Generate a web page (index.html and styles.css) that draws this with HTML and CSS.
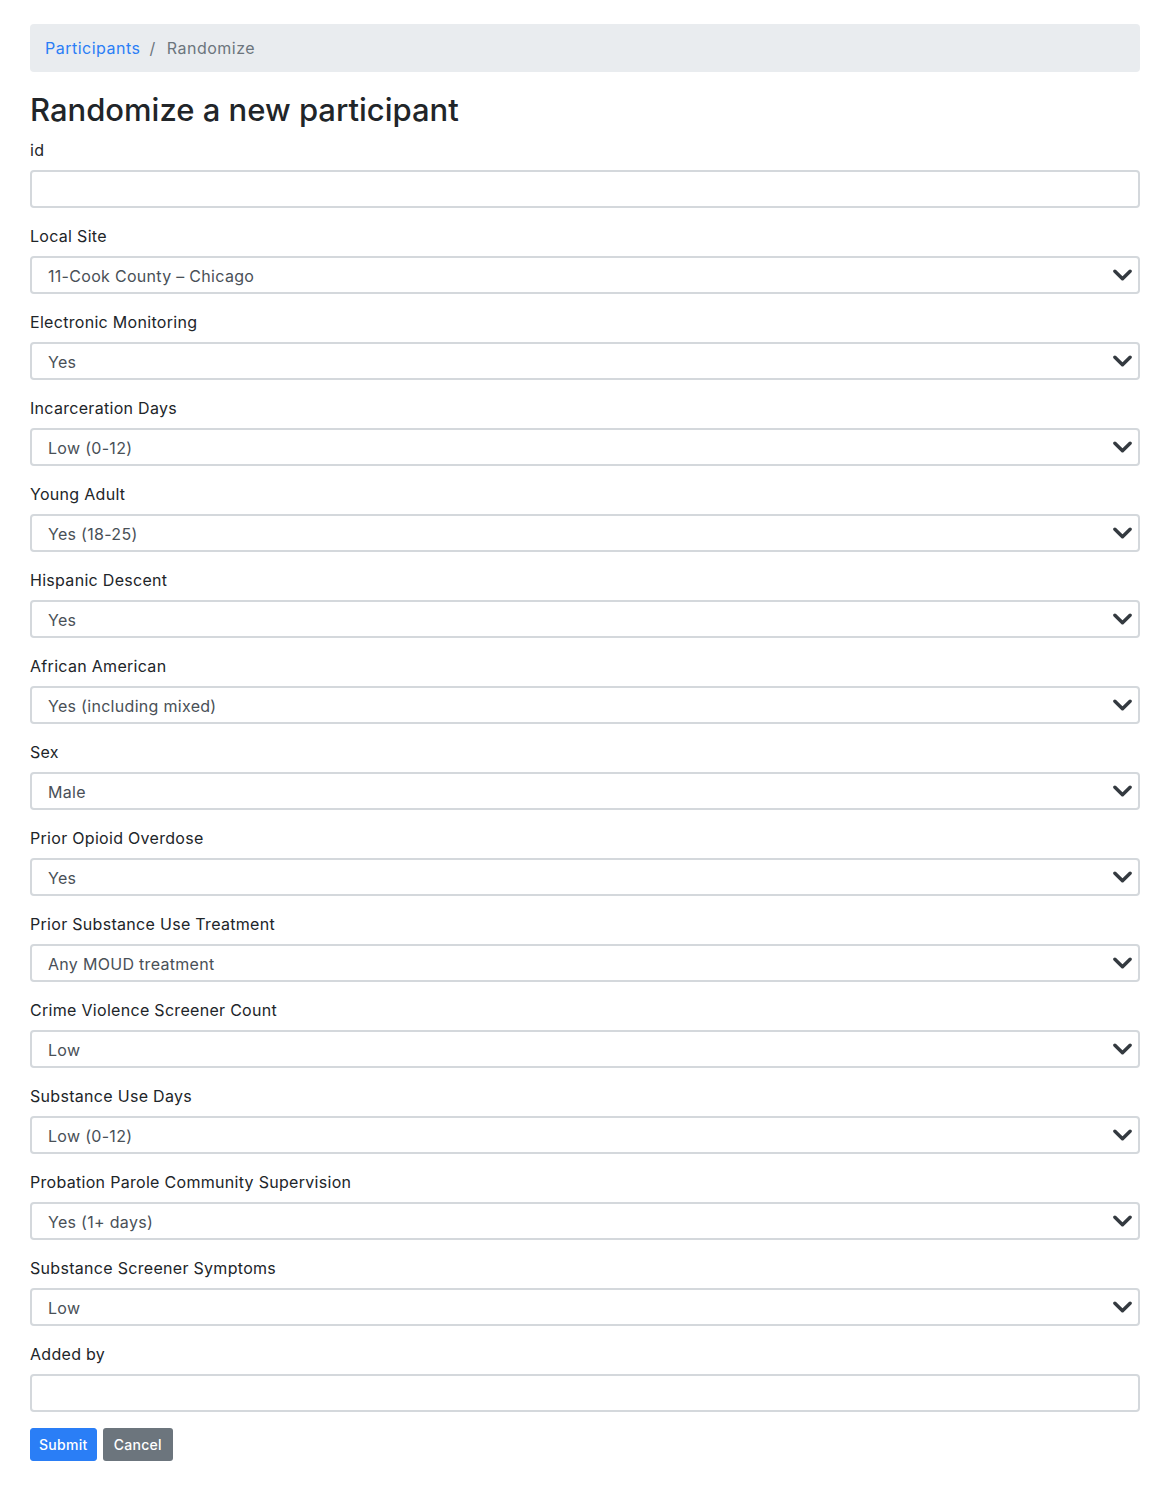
FILE: index.html
```html
<!DOCTYPE html>
<html>
<head>
<meta charset="utf-8">
<link rel="stylesheet" href="styles.css">
</head>
<body>
<div class="container">
  <nav class="breadcrumb">
    <a class="crumb-link" href="#">Participants</a>
    <span class="crumb-sep">/</span>
    <span class="crumb-active">Randomize</span>
  </nav>
  <h2 class="title">Randomize a new participant</h2>
  <form class="form">
    <div class="group"><label class="label">id</label><div class="control"></div></div>
    <div class="group"><label class="label">Local Site</label><div class="control select"><span>11-Cook County – Chicago</span><svg class="chev" viewBox="0 0 20 12"><path d="M2 2l8 8 8-8"/></svg></div></div>
    <div class="group"><label class="label">Electronic Monitoring</label><div class="control select"><span>Yes</span><svg class="chev" viewBox="0 0 20 12"><path d="M2 2l8 8 8-8"/></svg></div></div>
    <div class="group"><label class="label">Incarceration Days</label><div class="control select"><span>Low (0-12)</span><svg class="chev" viewBox="0 0 20 12"><path d="M2 2l8 8 8-8"/></svg></div></div>
    <div class="group"><label class="label">Young Adult</label><div class="control select"><span>Yes (18-25)</span><svg class="chev" viewBox="0 0 20 12"><path d="M2 2l8 8 8-8"/></svg></div></div>
    <div class="group"><label class="label">Hispanic Descent</label><div class="control select"><span>Yes</span><svg class="chev" viewBox="0 0 20 12"><path d="M2 2l8 8 8-8"/></svg></div></div>
    <div class="group"><label class="label">African American</label><div class="control select"><span>Yes (including mixed)</span><svg class="chev" viewBox="0 0 20 12"><path d="M2 2l8 8 8-8"/></svg></div></div>
    <div class="group"><label class="label">Sex</label><div class="control select"><span>Male</span><svg class="chev" viewBox="0 0 20 12"><path d="M2 2l8 8 8-8"/></svg></div></div>
    <div class="group"><label class="label">Prior Opioid Overdose</label><div class="control select"><span>Yes</span><svg class="chev" viewBox="0 0 20 12"><path d="M2 2l8 8 8-8"/></svg></div></div>
    <div class="group"><label class="label">Prior Substance Use Treatment</label><div class="control select"><span>Any MOUD treatment</span><svg class="chev" viewBox="0 0 20 12"><path d="M2 2l8 8 8-8"/></svg></div></div>
    <div class="group"><label class="label">Crime Violence Screener Count</label><div class="control select"><span>Low</span><svg class="chev" viewBox="0 0 20 12"><path d="M2 2l8 8 8-8"/></svg></div></div>
    <div class="group"><label class="label">Substance Use Days</label><div class="control select"><span>Low (0-12)</span><svg class="chev" viewBox="0 0 20 12"><path d="M2 2l8 8 8-8"/></svg></div></div>
    <div class="group"><label class="label">Probation Parole Community Supervision</label><div class="control select"><span>Yes (1+ days)</span><svg class="chev" viewBox="0 0 20 12"><path d="M2 2l8 8 8-8"/></svg></div></div>
    <div class="group"><label class="label">Substance Screener Symptoms</label><div class="control select"><span>Low</span><svg class="chev" viewBox="0 0 20 12"><path d="M2 2l8 8 8-8"/></svg></div></div>
    <div class="group"><label class="label">Added by</label><div class="control"></div></div>
    <div class="buttons">
      <button type="button" class="btn btn-primary">Submit</button>
      <button type="button" class="btn btn-secondary">Cancel</button>
    </div>
  </form>
</div>
</body>
</html>
```
FILE: styles.css
```css
html, body {
  margin: 0;
  padding: 0;
  background: #fff;
}
body {
  font-family: Inter, "Liberation Sans", sans-serif;
  font-size: 16px;
  line-height: 24px;
  color: #212529;
  letter-spacing: 0.3px;
}
.container {
  width: 1110px;
  margin-left: 30px;
  padding-top: 24px;
}
.breadcrumb {
  display: flex;
  align-items: center;
  height: 48px;
  box-sizing: border-box;
  padding: 0 15px;
  background: #e9ecef;
  border-radius: 4px;
  margin-bottom: 16px;
  letter-spacing: 0.5px;
}
.crumb-link {
  color: #2a7ef6;
  text-decoration: none;
}
.crumb-sep {
  color: #6c757d;
  padding: 0 11px 0 9px;
}
.crumb-active {
  color: #6c757d;
}
.title {
  margin: 0 0 6px 0;
  font-size: 31px;
  line-height: 44px;
  font-weight: 500;
  letter-spacing: 0;
}
.form {
  display: flex;
  flex-direction: column;
}
.group {
  display: flex;
  flex-direction: column;
  margin-bottom: 16px;
}
.label {
  line-height: 24px;
  margin-bottom: 8px;
}
.control {
  height: 38px;
  box-sizing: border-box;
  border: 2px solid #d4d8dc;
  border-radius: 4px;
  display: flex;
  align-items: center;
  padding: 2px 6px 0 16px;
  color: #495057;
}
.select span {
  flex: 1;
}
.chev {
  width: 19px;
  height: 12px;
  margin-top: -2px;
  fill: none;
  stroke: #343a40;
  stroke-width: 3.6;
  stroke-linecap: round;
  stroke-linejoin: round;
}
.buttons {
  display: flex;
  gap: 6px;
}
.btn {
  font-family: inherit;
  font-size: 14px;
  font-weight: 500;
  line-height: 21px;
  padding: 5px 8px;
  border: 1px solid transparent;
  border-radius: 3px;
  color: #fff;
  letter-spacing: 0.3px;
}
.btn-primary {
  background: #2a7ef6;
  border-color: #2a7ef6;
}
.btn-secondary {
  background: #6c757d;
  padding: 5px 10px;
}
```
